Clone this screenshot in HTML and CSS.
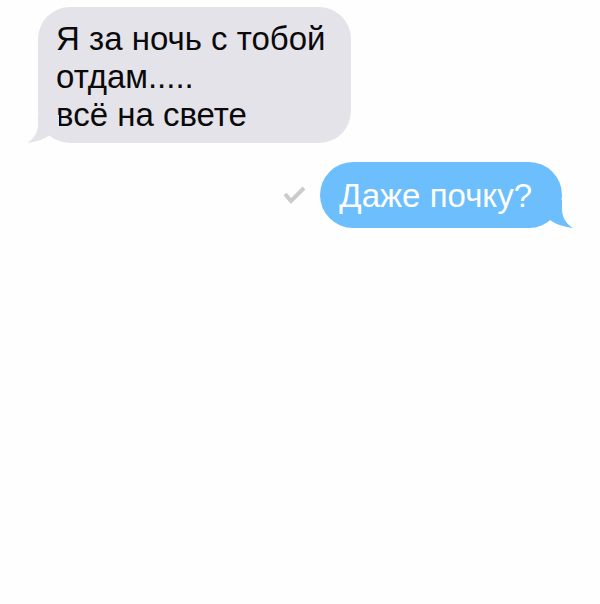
FILE: index.html
```html
<!DOCTYPE html>
<html lang="ru">
<head>
    <meta charset="UTF-8">
    <meta name="viewport" content="width=device-width, initial-scale=1.0">
    <title>Чат</title>
    <link rel="stylesheet" href="styles.css">
</head>
<body>
    <main class="chat">
        <div class="message incoming">
            <p class="bubble">Я за ночь с тобой<br>отдам.....<br>всё на свете</p>
            <svg class="tail" viewBox="0 0 32 28" aria-hidden="true">
                <path d="M11 0V9C11 17 7 24 0 28C8 27 16 25 23 20L32 14V0Z"/>
            </svg>
        </div>
        <div class="message outgoing">
            <svg class="check" viewBox="0 0 24 20" role="img" aria-label="Прочитано">
                <path d="M3 9L9 16L22 3"/>
            </svg>
            <div class="bubble-wrap">
                <p class="bubble">Даже почку?</p>
                <svg class="tail" viewBox="0 0 32 28" aria-hidden="true">
                    <path d="M21 0V9C21 17 25 24 32 28C24 27 16 25 9 20L0 14V0Z"/>
                </svg>
            </div>
        </div>
    </main>
</body>
</html>
```

FILE: styles.css
```css
body {
    margin: 0;
    background-color: #fefefe;
    font-family: "Liberation Sans", Arial, sans-serif;
    font-size: 33px;
    line-height: 38px;
}
.chat {
    display: flex;
    flex-direction: column;
    gap: 19px;
    padding: 7px 38px;
}
.message {
    position: relative;
    display: flex;
    align-items: center;
}
.incoming {
    align-self: flex-start;
}
.outgoing {
    align-self: flex-end;
    gap: 14px;
}
.bubble-wrap {
    position: relative;
}
.bubble {
    margin: 0;
    padding: 13px 25px 9px 18px;
    border-radius: 32px;
    background-color: #e5e3ea;
    color: #0a0a0a;
}
.outgoing .bubble {
    padding: 15px 30px 13px 19px;
    border-radius: 33px;
    background-color: #6cbefd;
    color: #fff;
}
.tail {
    position: absolute;
    bottom: 0;
    left: -11px;
    width: 32px;
    height: 28px;
    fill: #e5e3ea;
}
.outgoing .tail {
    left: auto;
    right: -11px;
    fill: #6cbefd;
}
.check {
    width: 24px;
    height: 20px;
    fill: none;
    stroke: #cbcbcb;
    stroke-width: 4;
}
```
